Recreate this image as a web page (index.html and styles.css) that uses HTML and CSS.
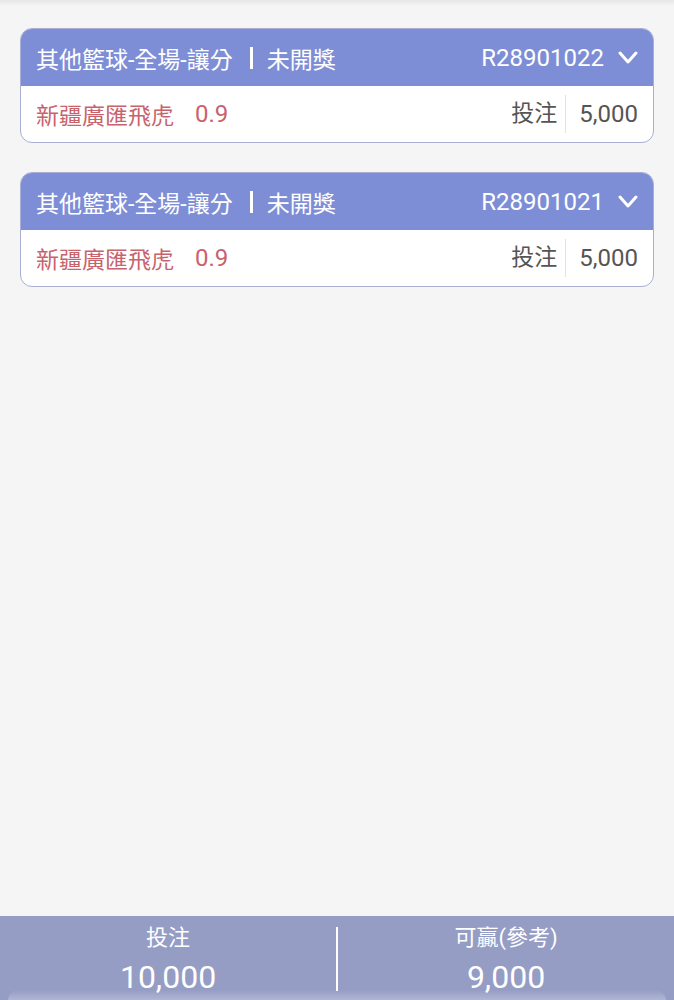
FILE: index.html
```html
<!DOCTYPE html>
<html lang="zh-Hant">
<head>
  <meta charset="UTF-8" />
  <meta name="viewport" content="width=device-width, initial-scale=1.0"/>
  <title>注單</title>
  <link rel="stylesheet" href="styles.css">
</head>
<body>

  <div class="list">
    <div class="bet">
      <div class="bet-head">
        <span class="game">其他籃球-全場-讓分</span>
        <span class="sep"></span>
        <span class="status">未開獎</span>
        <span class="no">R28901022</span>
        <svg class="arrow" viewBox="0 0 20 14" width="20" height="14">
          <path d="M2 2 L10 11 L18 2" fill="none" stroke="#fff" stroke-width="3" stroke-linecap="round" stroke-linejoin="round"/>
        </svg>
      </div>
      <div class="bet-body">
        <span class="pick">新疆廣匯飛虎</span>
        <span class="odds">0.9</span>
        <span class="label">投注</span>
        <span class="amount">5,000</span>
      </div>
    </div>

    <div class="bet">
      <div class="bet-head">
        <span class="game">其他籃球-全場-讓分</span>
        <span class="sep"></span>
        <span class="status">未開獎</span>
        <span class="no">R28901021</span>
        <svg class="arrow" viewBox="0 0 20 14" width="20" height="14">
          <path d="M2 2 L10 11 L18 2" fill="none" stroke="#fff" stroke-width="3" stroke-linecap="round" stroke-linejoin="round"/>
        </svg>
      </div>
      <div class="bet-body">
        <span class="pick">新疆廣匯飛虎</span>
        <span class="odds">0.9</span>
        <span class="label">投注</span>
        <span class="amount">5,000</span>
      </div>
    </div>
  </div>

  <div class="summary">
    <div class="cell">
      <div class="cell-title">投注</div>
      <div class="cell-value">10,000</div>
    </div>
    <div class="divider"></div>
    <div class="cell">
      <div class="cell-title">可贏(參考)</div>
      <div class="cell-value">9,000</div>
    </div>
  </div>

</body>
</html>
```

FILE: styles.css
```css
html, body {
  margin: 0;
  height: 100%;
}
body {
  font-family: Roboto, "Noto Sans CJK TC", sans-serif;
  background: #f5f5f5;
  display: flex;
  flex-direction: column;
  position: relative;
}
body::before {
  content: "";
  position: absolute;
  top: 0;
  left: 0;
  right: 0;
  height: 6px;
  background: linear-gradient(#e6e6e6, #f5f5f5);
}
.list {
  flex: 1;
  padding: 28px 20px 0 20px;
  display: flex;
  flex-direction: column;
  gap: 29px;
}
.bet {
  border: 1px solid #a9aed4;
  border-radius: 12px;
  background: #fff;
  overflow: hidden;
}
.bet-head {
  background: #7e8ed6;
  color: #fff;
  height: 57px;
  display: flex;
  align-items: center;
  padding: 0 15px;
  font-size: 23px;
}
.sep {
  width: 3px;
  height: 22px;
  background: #fff;
  margin: 0 14px 0 17px;
}
.no {
  margin-left: auto;
  font-size: 24px;
}
.arrow {
  margin-left: 14px;
}
.bet-body {
  height: 56px;
  display: flex;
  align-items: center;
  padding: 0 15px;
  font-size: 23px;
}
.pick, .odds {
  color: #c7636d;
}
.odds {
  margin-left: 21px;
  font-size: 24px;
}
.label {
  margin-left: auto;
  color: #555;
  padding-right: 8px;
  border-right: 1px solid #e2e2e2;
  line-height: 38px;
}
.amount {
  color: #555;
  padding-left: 13px;
  font-size: 24px;
}
.summary {
  height: 84px;
  background: #959dc5;
  display: flex;
  align-items: center;
  color: #fff;
  position: relative;
}
.summary::after {
  content: "";
  position: absolute;
  left: 8px;
  right: 8px;
  bottom: 0;
  height: 10px;
  border-radius: 14px 14px 0 0;
  background: linear-gradient(rgba(255,255,255,0), rgba(255,255,255,0.25));
}
.cell {
  flex: 1;
  text-align: center;
  padding-top: 6px;
}
.cell-title {
  font-size: 22px;
  line-height: 30px;
}
.cell-value {
  font-size: 32px;
  line-height: 44px;
  margin-top: 2px;
}
.divider {
  width: 2px;
  height: 64px;
  margin-top: 2px;
  background: #fff;
}
```
